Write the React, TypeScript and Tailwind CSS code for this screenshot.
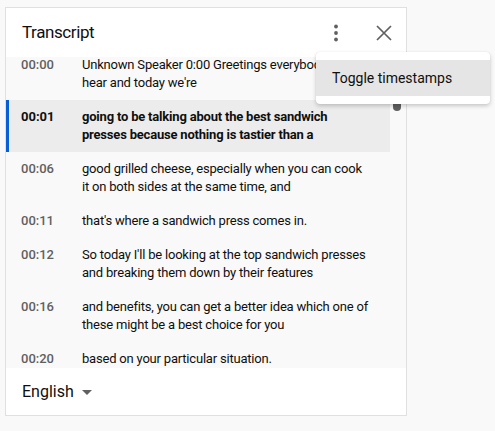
import React from "react";

type Row = { t: string; lines: React.ReactNode; active?: boolean };

const rows: Row[] = [
  {
    t: "00:00",
    lines: (
      <>
        Unknown Speaker 0:00 Greetings everybody
        <br />
        hear and today we're
      </>
    ),
  },
  {
    t: "00:01",
    active: true,
    lines: (
      <>
        going to be talking about the best sandwich
        <br />
        presses because nothing is tastier than a
      </>
    ),
  },
  {
    t: "00:06",
    lines: (
      <>
        good grilled cheese, especially when you can cook
        <br />
        it on both sides at the same time, and
      </>
    ),
  },
  { t: "00:11", lines: "that's where a sandwich press comes in." },
  {
    t: "00:12",
    lines: (
      <>
        So today I'll be looking at the top sandwich presses
        <br />
        and breaking them down by their features
      </>
    ),
  },
  {
    t: "00:16",
    lines: (
      <>
        and benefits, you can get a better idea which one of
        <br />
        these might be a best choice for you
      </>
    ),
  },
  { t: "00:20", lines: "based on your particular situation." },
];

export default function App() {
  return (
    <div
      className="relative w-[495px] h-[431px] bg-[#f9f9f9] pl-[5px] pt-[7px] overflow-hidden"
      style={{ fontFamily: "Roboto, 'Noto Sans', sans-serif" }}
    >
      <div className="w-[402px] h-[409px] border border-[#e0e0e0] bg-white flex flex-col">
        {/* header */}
        <div className="h-[49px] shrink-0 flex items-center pl-4 pr-[2px]">
          <div className="flex-1 text-[17px] tracking-[-0.4px] text-[#0f0f0f] leading-none">Transcript</div>
          <div className="w-[40px] h-[40px] flex items-center justify-center mr-[8px]">
            <svg width="24" height="24" viewBox="0 0 24 24" fill="#606060">
              <circle cx="12" cy="5.5" r="1.9" />
              <circle cx="12" cy="12" r="1.9" />
              <circle cx="12" cy="18.5" r="1.9" />
            </svg>
          </div>
          <div className="w-[40px] h-[40px] flex items-center justify-center">
            <svg width="24" height="24" viewBox="0 0 24 24" fill="none" stroke="#606060" strokeWidth="1.7">
              <path d="M5 5 L19 19 M19 5 L5 19" />
            </svg>
          </div>
        </div>

        {/* content */}
        <div className="flex-1 flex bg-[#f9f9f9] overflow-hidden">
          <div className="w-[384px] shrink-0 overflow-hidden">
            <div className="-mt-[9px]">
              {rows.map((r) => (
                <div
                  key={r.t}
                  className={
                    "flex py-2 border-l-[3px] " +
                    (r.active ? "bg-[#ececec] border-[#065fd4]" : "border-transparent")
                  }
                >
                  <div
                    className={
                      "w-[73px] shrink-0 pl-[12px] text-[13px] leading-[18px] " +
                      (r.active ? "font-bold text-[#0f0f0f]" : "font-medium text-[#606060]")
                    }
                  >
                    {r.t}
                  </div>
                  <div
                    className={
                      "w-[294px] text-[13px] leading-[18px] tracking-[-0.2px] text-[#0f0f0f] " +
                      (r.active ? "font-bold" : "")
                    }
                  >
                    {r.lines}
                  </div>
                </div>
              ))}
            </div>
          </div>
          <div className="flex-1 relative">
            <div className="absolute left-[3px] top-[3px] w-[8px] h-[51px] rounded-full bg-[#606060]" />
          </div>
        </div>

        {/* footer */}
        <div className="h-[47px] shrink-0 bg-white flex items-center pl-4">
          <span className="text-[16px] text-[#0f0f0f]">English</span>
          <svg width="24" height="24" viewBox="0 0 24 24" className="ml-[1px]" fill="#606060">
            <path d="M7 10 L12 15 L17 10 Z" />
          </svg>
        </div>
      </div>

      {/* menu */}
      <div className="absolute left-[316px] top-[52px] w-[174px] bg-white rounded-[4px] py-2 shadow-[0_2px_4px_rgba(0,0,0,0.2),0_0_1px_rgba(0,0,0,0.1)]">
        <div className="h-[36px] bg-[#e5e5e5] flex items-center pl-4 text-[14px] text-[#0f0f0f]">
          Toggle timestamps
        </div>
      </div>
    </div>
  );
}
